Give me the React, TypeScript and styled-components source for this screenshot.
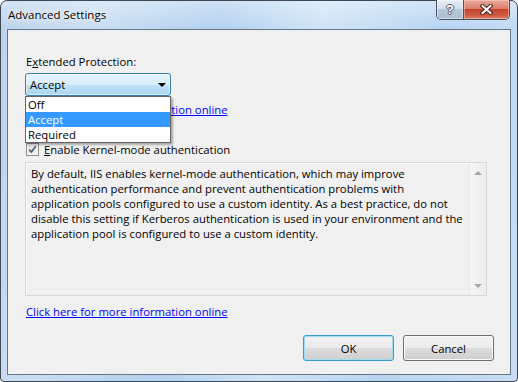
import React from "react";
import styled, { createGlobalStyle, css } from "styled-components";

const GlobalStyle = createGlobalStyle`
  html, body {
    margin: 0;
    padding: 0;
    background: #ffffff;
  }
  body {
    font-family: "Open Sans", "Noto Sans", sans-serif;
    font-size: 11.3px;
    color: #000;
  }
`;

const Window = styled.div`
  box-sizing: border-box;
  width: 518px;
  height: 382px;
  display: flex;
  flex-direction: column;
  padding: 0 6px 6px;
  border: 1px solid #3f4852;
  border-radius: 7px 7px 4px 4px;
  background:
    linear-gradient(180deg, rgba(255, 255, 255, 0.35) 0, rgba(255, 255, 255, 0) 28px),
    linear-gradient(
      100deg,
      #bcd3ec 0%,
      #cadef2 16%,
      #b4d1f0 38%,
      #d0e4f6 56%,
      #b9d5f3 76%,
      #c8ddf3 100%
    );
`;

const TitleBar = styled.div`
  display: flex;
  align-items: flex-start;
  height: 28px;
  flex-shrink: 0;
`;

const TitleText = styled.div`
  margin: 6px 0 0 1px;
  font-size: 11.5px;
  line-height: 15px;
  color: #000;
  text-shadow: 0 0 6px rgba(255, 255, 255, 0.95), 0 0 2px rgba(255, 255, 255, 0.9);
`;

const Controls = styled.div`
  display: flex;
  margin: -1px 1px 0 auto;
  height: 20px;
  border: 1px solid #4a525c;
  border-top: none;
  border-radius: 0 0 5px 5px;
  overflow: hidden;
  box-sizing: border-box;
`;

const CaptionButton = styled.div<{ $kind: "help" | "close" }>`
  display: flex;
  align-items: center;
  justify-content: center;
  height: 100%;
  ${({ $kind }) =>
    $kind === "help"
      ? css`
          width: 26px;
          border-right: 1px solid #4a525c;
          background: linear-gradient(#e6eef7 0%, #d3dfec 45%, #b6c6d8 50%, #aebfd3 100%);
          box-shadow: inset 0 0 0 1px rgba(255, 255, 255, 0.45);
        `
      : css`
          width: 45px;
          background: linear-gradient(#e9a99a 0%, #d9806b 45%, #c7432d 50%, #cd5a40 80%, #d9806a 100%);
          box-shadow: inset 0 0 0 1px rgba(255, 220, 210, 0.45);
        `}
`;

const HelpGlyph = styled.span`
  font-family: "Liberation Sans", sans-serif;
  font-weight: bold;
  font-size: 13px;
  line-height: 13px;
  color: #fff;
  text-shadow: 1px 0 #4d5867, -1px 0 #4d5867, 0 1px #4d5867, 0 -1px #4d5867;
`;

const Client = styled.div`
  position: relative;
  flex: 1;
  display: flex;
  flex-direction: column;
  align-items: flex-start;
  padding: 24px 16px 13px 17px;
  border: 1px solid #66768a;
  background: #f0f0f0;
`;

const Label = styled.div`
  margin-left: 1px;
  line-height: 15px;
`;

const Combo = styled.div`
  position: relative;
  box-sizing: border-box;
  width: 146px;
  height: 23px;
  margin-top: 4px;
  display: flex;
  align-items: center;
  padding: 0 0 0 4px;
  border: 1px solid #3c7fb1;
  border-radius: 3px;
  background: linear-gradient(#e6f4fc 0%, #d8eefa 50%, #c0e3f6 50%, #aad6ef 100%);
  box-shadow: inset 0 0 0 1px rgba(255, 255, 255, 0.5);
`;

const ComboValue = styled.span`
  flex: 1;
  line-height: 15px;
`;

const Arrow = styled.span<{ $color?: string }>`
  width: 0;
  height: 0;
  border-left: 4px solid transparent;
  border-right: 4px solid transparent;
  border-top: 4px solid ${({ $color }) => $color ?? "#000"};
`;

const ComboArrow = styled(Arrow)`
  margin-right: 4px;
`;

const List = styled.div`
  position: absolute;
  z-index: 2;
  top: calc(100% + 1px);
  left: -1px;
  box-sizing: border-box;
  width: 146px;
  border: 1px solid #646464;
  background: #fff;
  box-shadow: 2px 2px 2px rgba(0, 0, 0, 0.3);
`;

const Option = styled.div<{ $selected?: boolean }>`
  height: 15px;
  line-height: 15px;
  padding-left: 2px;
  background: ${({ $selected }) => ($selected ? "#3399ff" : "#fff")};
  color: ${({ $selected }) => ($selected ? "#fff" : "#000")};
`;

const Link = styled.a<{ $gap: number }>`
  margin: ${({ $gap }) => $gap}px 0 0 1px;
  line-height: 15px;
  color: #0000ff;
  text-decoration: underline;
  cursor: pointer;
`;

const CheckRow = styled.label`
  display: flex;
  align-items: center;
  gap: 5px;
  margin: 25px 0 0 1px;
  line-height: 15px;
`;

const CheckBox = styled.span`
  box-sizing: border-box;
  width: 13px;
  height: 13px;
  display: flex;
  align-items: center;
  justify-content: center;
  border: 1px solid #8f8f8f;
  background: linear-gradient(135deg, #dcdcdc 0%, #f4f4f4 100%);
  box-shadow: inset 0 0 0 1px #f6f6f6;
`;

const TextBox = styled.div`
  box-sizing: border-box;
  display: flex;
  width: 462px;
  height: 134px;
  margin-top: 5px;
  border: 1px solid #d7d7d7;
  box-shadow: inset 1px 1px 0 #fafafa;
  background: #f0f0f0;
`;

const TextContent = styled.div`
  flex: 1;
  padding: 3px 0 0 5px;
  line-height: 15px;
  white-space: nowrap;
  overflow: hidden;
`;

const ScrollBar = styled.div`
  box-sizing: border-box;
  width: 17px;
  display: flex;
  flex-direction: column;
  align-items: center;
  justify-content: space-between;
  padding: 8px 0 7px;
  border-left: 1px solid #e6e6e6;
  background: linear-gradient(90deg, #f6f6f6, #ececec);
`;

const UpArrow = styled.span`
  width: 0;
  height: 0;
  border-left: 4px solid transparent;
  border-right: 4px solid transparent;
  border-bottom: 4px solid #a7a7a7;
`;

const ButtonRow = styled.div`
  align-self: stretch;
  display: flex;
  justify-content: flex-end;
  gap: 9px;
  margin-top: auto;
`;

const Button = styled.button<{ $default?: boolean }>`
  box-sizing: border-box;
  width: 91px;
  height: 26px;
  padding: 0;
  border-radius: 3px;
  font-family: inherit;
  font-size: 11.3px;
  color: #000;
  background: linear-gradient(#f2f2f2 0%, #ebebeb 50%, #dddddd 50%, #cfcfcf 100%);
  ${({ $default }) =>
    $default
      ? css`
          border: 1px solid #3c9ad0;
          box-shadow: inset 0 0 0 1px #9ddcf6;
        `
      : css`
          border: 1px solid #707070;
          box-shadow: inset 0 0 0 1px #fbfbfb;
        `}
`;

const lines = [
  "By default, IIS enables kernel-mode authentication, which may improve",
  "authentication performance and prevent authentication problems with",
  "application pools configured to use a custom identity. As a best practice, do not",
  "disable this setting if Kerberos authentication is used in your environment and the",
  "application pool is configured to use a custom identity.",
];

export default function App() {
  return (
    <>
      <GlobalStyle />
      <Window>
        <TitleBar>
          <TitleText>Advanced Settings</TitleText>
          <Controls>
            <CaptionButton $kind="help">
              <HelpGlyph>?</HelpGlyph>
            </CaptionButton>
            <CaptionButton $kind="close">
              <svg width="13" height="11" viewBox="0 0 13 11">
                <path d="M2.5 2 L10.5 9 M10.5 2 L2.5 9" stroke="#4b2620" strokeWidth="4.2" strokeLinecap="square" />
                <path d="M2.5 2 L10.5 9 M10.5 2 L2.5 9" stroke="#fff" strokeWidth="2" strokeLinecap="square" />
              </svg>
            </CaptionButton>
          </Controls>
        </TitleBar>
        <Client>
          <Label>
            E<u>x</u>tended Protection:
          </Label>
          <Combo>
            <ComboValue>Accept</ComboValue>
            <ComboArrow />
            <List>
              <Option>Off</Option>
              <Option $selected>Accept</Option>
              <Option>Required</Option>
            </List>
          </Combo>
          <Link $gap={6}>Click here for more information online</Link>
          <CheckRow>
            <CheckBox>
              <svg width="9" height="9" viewBox="0 0 9 9">
                <path d="M1.2 4.6 L3.4 7 L7.8 1.2" fill="none" stroke="#4c5c7e" strokeWidth="1.6" />
              </svg>
            </CheckBox>
            <span>
              <u>E</u>nable Kernel-mode authentication
            </span>
          </CheckRow>
          <TextBox>
            <TextContent>
              {lines.map((l) => (
                <div key={l}>{l}</div>
              ))}
            </TextContent>
            <ScrollBar>
              <UpArrow />
              <Arrow $color="#a7a7a7" />
            </ScrollBar>
          </TextBox>
          <Link $gap={8}>Click here for more information online</Link>
          <ButtonRow>
            <Button $default>OK</Button>
            <Button>Cancel</Button>
          </ButtonRow>
        </Client>
      </Window>
    </>
  );
}
